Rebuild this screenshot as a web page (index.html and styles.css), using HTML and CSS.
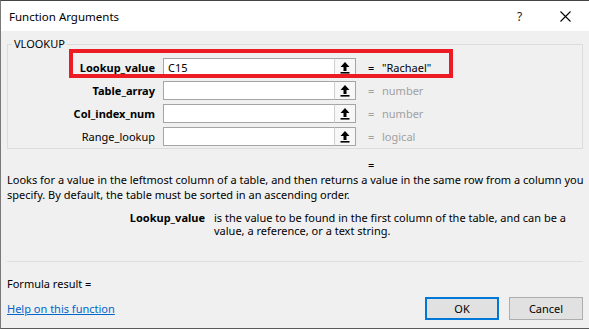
FILE: index.html
```html
<!DOCTYPE html>
<html lang="en">
<head>
    <meta charset="UTF-8">
    <meta name="viewport" content="width=device-width, initial-scale=1.0">
    <title>Function Arguments</title>
    <link rel="stylesheet" href="styles.css">
</head>
<body>
    <div class="dialog">
        <div class="titlebar">
            <span class="title">Function Arguments</span>
            <span class="help-btn">?</span>
            <span class="close-btn">
                <svg width="11" height="11" viewBox="0 0 11 11"><path d="M0.5 0.5 L10.5 10.5 M10.5 0.5 L0.5 10.5" stroke="#000" stroke-width="1.1" fill="none"/></svg>
            </span>
        </div>

        <fieldset class="group">
            <legend>VLOOKUP</legend>
            <div class="row highlight">
                <label class="label bold">Lookup_value</label>
                <div class="field">
                    <input type="text" value="C15">
                    <span class="ref-btn">
                        <svg width="10" height="12" viewBox="0 0 10 12"><path d="M5 0 L9.5 5 H6.5 V9 H3.5 V5 H0.5 Z" fill="#000"/><rect x="0.5" y="10" width="9" height="1.6" fill="#000"/></svg>
                    </span>
                </div>
                <span class="eq">=</span>
                <span class="val">"Rachael"</span>
            </div>
            <div class="row">
                <label class="label bold">Table_array</label>
                <div class="field">
                    <input type="text">
                    <span class="ref-btn">
                        <svg width="10" height="12" viewBox="0 0 10 12"><path d="M5 0 L9.5 5 H6.5 V9 H3.5 V5 H0.5 Z" fill="#000"/><rect x="0.5" y="10" width="9" height="1.6" fill="#000"/></svg>
                    </span>
                </div>
                <span class="eq muted">=</span>
                <span class="val muted">number</span>
            </div>
            <div class="row">
                <label class="label bold">Col_index_num</label>
                <div class="field">
                    <input type="text">
                    <span class="ref-btn">
                        <svg width="10" height="12" viewBox="0 0 10 12"><path d="M5 0 L9.5 5 H6.5 V9 H3.5 V5 H0.5 Z" fill="#000"/><rect x="0.5" y="10" width="9" height="1.6" fill="#000"/></svg>
                    </span>
                </div>
                <span class="eq muted">=</span>
                <span class="val muted">number</span>
            </div>
            <div class="row">
                <label class="label">Range_lookup</label>
                <div class="field">
                    <input type="text">
                    <span class="ref-btn">
                        <svg width="10" height="12" viewBox="0 0 10 12"><path d="M5 0 L9.5 5 H6.5 V9 H3.5 V5 H0.5 Z" fill="#000"/><rect x="0.5" y="10" width="9" height="1.6" fill="#000"/></svg>
                    </span>
                </div>
                <span class="eq muted">=</span>
                <span class="val muted">logical</span>
            </div>
        </fieldset>

        <div class="result-eq">=</div>
        <p class="summary">Looks for a value in the leftmost column of a table, and then returns a value in the same row from a column you specify. By default, the table must be sorted in an ascending order.</p>

        <div class="arg-help">
            <span class="arg-name">Lookup_value</span>
            <span class="arg-text">is the value to be found in the first column of the table, and can be a value, a reference, or a text string.</span>
        </div>

        <div class="footer">
            <div class="formula">Formula result =</div>
            <div class="actions">
                <a href="#" class="help-link">Help on this function</a>
                <button class="btn btn-default">OK</button>
                <button class="btn">Cancel</button>
            </div>
        </div>
    </div>
</body>
</html>
```

FILE: styles.css
```css
body {
    margin: 0;
    font-family: "Segoe UI", "Noto Sans", sans-serif;
    font-size: 11px;
    color: #000;
    background: #f0f0f0;
}

.dialog {
    width: 589px;
    height: 329px;
    box-sizing: border-box;
    border-top: 1px solid #454545;
    border-left: 1px solid #7a7a7a;
    border-bottom: 1px solid #5a5a5a;
    background: #f0f0f0;
    display: flex;
    flex-direction: column;
}

.titlebar {
    height: 30px;
    background: #fff;
    display: flex;
    align-items: center;
    padding-left: 8px;
}

.title {
    flex: 1;
    font-size: 11.5px;
}

.help-btn {
    width: 12px;
    margin-right: 31px;
    font-size: 12px;
    color: #222;
}

.close-btn {
    display: flex;
    margin-right: 18px;
}

.group {
    margin: 6px 6px 0 6px;
    padding: 7px 0 2px 0;
    border: 1px solid #dcdcdc;
    min-width: 0;
}

.group legend {
    margin-left: 4px;
    padding: 0 2px;
    line-height: 14px;
}

.row {
    display: flex;
    align-items: center;
    height: 19px;
    margin-bottom: 4px;
}

.row:last-child {
    margin-bottom: 0;
}

.highlight {
    position: relative;
}

.highlight::after {
    content: "";
    position: absolute;
    left: 61px;
    top: -9px;
    width: 384px;
    height: 29px;
    box-sizing: border-box;
    border: 4px solid #ed1c24;
}

.label {
    width: 147px;
    margin-right: 8px;
    text-align: right;
}

.bold {
    font-weight: bold;
}

.field {
    display: flex;
    height: 19px;
}

.field input {
    width: 171px;
    height: 19px;
    box-sizing: border-box;
    border: 1px solid #a5a5a5;
    border-right: none;
    padding: 0 4px;
    font-family: inherit;
    font-size: 11px;
    background: #fff;
    outline: none;
}

.ref-btn {
    width: 22px;
    height: 19px;
    box-sizing: border-box;
    border: 1px solid #a5a5a5;
    border-left-color: #d0d0d0;
    background: #f7f7f7;
    display: flex;
    align-items: center;
    justify-content: center;
}

.eq {
    margin-left: 12px;
    width: 14px;
}

.muted {
    color: #a0a0a0;
}

.result-eq {
    padding-left: 367px;
    margin-top: 9px;
    line-height: 14px;
}

.summary {
    margin: 0 0 0 6px;
    width: 580px;
    line-height: 15px;
}

.arg-help {
    display: flex;
    margin-top: 9px;
    line-height: 13px;
}

.arg-name {
    width: 204px;
    text-align: right;
    font-weight: bold;
    flex-shrink: 0;
}

.arg-text {
    margin-left: 9px;
    width: 362px;
}

.footer {
    margin-top: auto;
    border-top: 1px solid #dedede;
    margin-left: 6px;
    margin-right: 6px;
    padding-bottom: 8px;
}

.formula {
    margin-top: 14px;
    line-height: 15px;
}

.actions {
    display: flex;
    align-items: center;
    margin-top: 6px;
}

.help-link {
    flex: 1;
    color: #0066cc;
    text-decoration: underline;
}

.btn {
    width: 74px;
    height: 23px;
    box-sizing: border-box;
    border: 1px solid #adadad;
    background: #e1e1e1;
    font-family: inherit;
    font-size: 11px;
    margin-left: 10px;
    padding: 0;
}

.btn-default {
    border: 2px solid #0078d7;
}
```
